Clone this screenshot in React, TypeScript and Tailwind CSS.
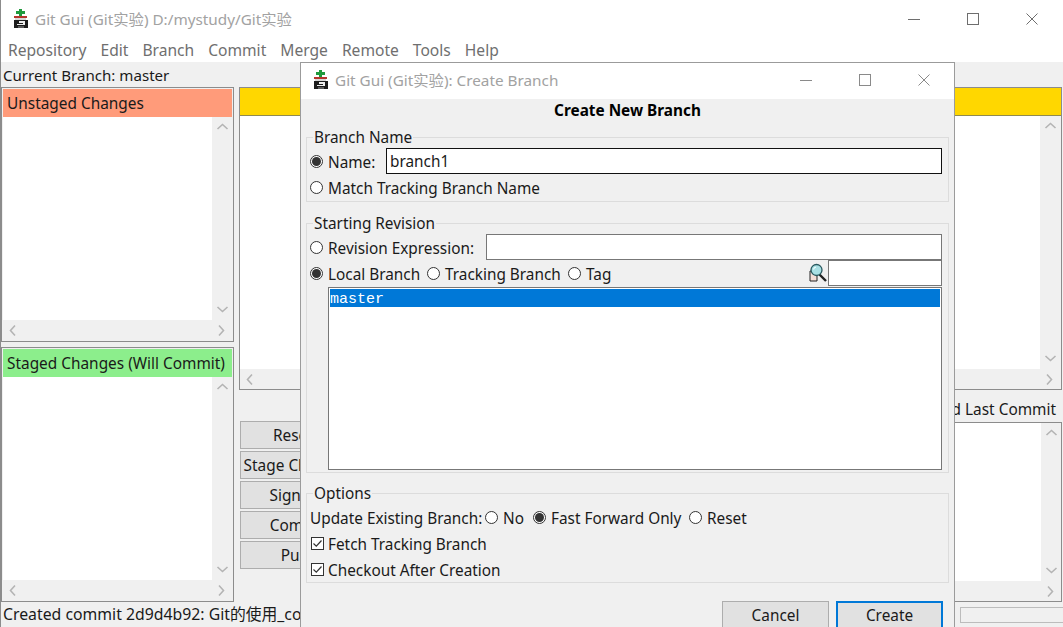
import type { ReactNode } from "react";

const uiFont = "font-['Noto_Sans','Noto_Sans_CJK_SC',sans-serif]";

function GitIcon() {
  return (
    <svg width="16" height="20" viewBox="0 0 16 20" shapeRendering="crispEdges" className="shrink-0">
      <rect x="6" y="0" width="3" height="7" fill="#1f9a3c" />
      <rect x="3" y="2" width="9" height="3" fill="#1f9a3c" />
      <rect x="1" y="7" width="13" height="2" fill="#b5352c" />
      <rect x="2" y="9" width="11" height="2" fill="#d9d9d9" />
      <rect x="1" y="11" width="14" height="8" fill="#1c1c1c" />
      <rect x="6" y="12" width="6" height="2" fill="#eeeeee" />
      <rect x="10" y="12" width="2" height="4" fill="#eeeeee" />
      <rect x="4" y="15" width="7" height="1" fill="#eeeeee" />
      <rect x="5" y="17" width="6" height="2" fill="#5a5a5a" />
    </svg>
  );
}

function SearchIcon() {
  return (
    <svg width="19" height="20" viewBox="0 0 19 20" className="shrink-0">
      <path d="M1 8H8V18H1Z" fill="#f5dfd8" stroke="#222" strokeWidth="1" />
      <path d="M10 11L17 18" stroke="#222" strokeWidth="2.4" />
      <circle cx="7.5" cy="7" r="5.5" fill="#a9e0e4" stroke="#2b5a60" strokeWidth="1.3" />
      <path d="M4.5 6.5A3 3 0 0 1 7 4" stroke="#f2ffff" strokeWidth="1.2" fill="none" />
    </svg>
  );
}

function WindowButtons({ color }: { color: string }) {
  return (
    <div className="flex items-center">
      <svg width="59" height="14" viewBox="0 0 59 14">
        <path d="M23 7.5H35" stroke={color} />
      </svg>
      <svg width="59" height="14" viewBox="0 0 59 14">
        <rect x="23.5" y="1.5" width="11" height="11" fill="none" stroke={color} />
      </svg>
      <svg width="59" height="14" viewBox="0 0 59 14">
        <path d="M23.5 1.5L34.5 12.5M34.5 1.5L23.5 12.5" stroke={color} />
      </svg>
    </div>
  );
}

const chevrons = {
  up: "M1.5 8L6.5 3.5L11.5 8",
  down: "M1.5 4L6.5 8.5L11.5 4",
  left: "M8 1.5L3.5 6.5L8 11.5",
  right: "M4 1.5L8.5 6.5L4 11.5",
};

function Chevron({ dir }: { dir: keyof typeof chevrons }) {
  return (
    <svg width="13" height="13" viewBox="0 0 13 13">
      <path d={chevrons[dir]} fill="none" stroke="#b4b4b4" strokeWidth="1.6" />
    </svg>
  );
}

function VScroll() {
  return (
    <div className="w-5 shrink-0 bg-[#f0f0f0] flex flex-col items-center justify-between py-1">
      <Chevron dir="up" />
      <Chevron dir="down" />
    </div>
  );
}

function HScroll() {
  return (
    <div className="h-5 shrink-0 bg-[#f0f0f0] flex items-center justify-between px-1">
      <Chevron dir="left" />
      <Chevron dir="right" />
    </div>
  );
}

function FileList({ title, color }: { title: string; color: string }) {
  return (
    <div className="h-[255px] border border-[#8c8c8c] p-px flex flex-col">
      <div className={`h-7 shrink-0 px-1 text-[15.4px] leading-[30px] text-[#1a1a1a] whitespace-nowrap ${color}`}>{title}</div>
      <div className="flex-1 flex min-h-0">
        <div className="flex-1 bg-white" />
        <VScroll />
      </div>
      <HScroll />
    </div>
  );
}

function SideButton({ children }: { children: ReactNode }) {
  return (
    <div className="h-7 border border-[#adadad] bg-[#e1e1e1] text-[15.4px] leading-7 text-center text-[#1a1a1a] whitespace-nowrap">
      {children}
    </div>
  );
}

function Radio({ checked }: { checked?: boolean }) {
  return (
    <span className="w-[13px] h-[13px] shrink-0 rounded-full border border-[#333] bg-white flex items-center justify-center">
      {checked && <span className="w-[9px] h-[9px] rounded-full bg-[#333]" />}
    </span>
  );
}

function Check() {
  return (
    <span className="w-[13px] h-[13px] shrink-0 border border-[#333] bg-white flex items-center justify-center">
      <svg width="11" height="11" viewBox="0 0 11 11">
        <path d="M1.5 5.5L4.3 8.2L9.5 2.5" fill="none" stroke="#333" strokeWidth="1.2" />
      </svg>
    </span>
  );
}

function Group({ title, className, children }: { title: string; className: string; children: ReactNode }) {
  return (
    <fieldset className={`border border-[#dcdcdc] pl-[3px] ${className}`}>
      <legend className="ml-[3px] px-px leading-5 text-[#1a1a1a]">{title}</legend>
      {children}
    </fieldset>
  );
}

function CreateBranchDialog() {
  return (
    <div className="absolute left-[299px] top-[62px] w-[655px] h-[580px] border border-[#9b9b9b] bg-[#f0f0f0] text-[15.35px] text-[#1a1a1a]">
      <div className="h-9 bg-white flex items-center justify-between pb-[2px]">
        <div className="flex items-center gap-[6px] pl-3">
          <GitIcon />
          <span className="text-[15.3px] text-[#a2a2a2] whitespace-nowrap">Git Gui (Git实验): Create Branch</span>
        </div>
        <WindowButtons color="#8a8a8a" />
      </div>

      <div className="h-6 text-center font-bold leading-[22px] text-black">Create New Branch</div>

      <div className="px-[5px]">
        <Group title="Branch Name" className="h-[75px] mt-[4px]">
          <div className="flex items-center h-[26px] mt-px">
            <Radio checked />
            <span className="ml-[5px] w-[58px] pt-[3px]">Name:</span>
            <div className="w-[556px] h-[26px] border border-[#111] bg-white pl-[3px] leading-[25px]">branch1</div>
          </div>
          <div className="flex items-center h-[26px]">
            <Radio />
            <span className="ml-[5px] pt-[3px]">Match Tracking Branch Name</span>
          </div>
        </Group>

        <Group title="Starting Revision" className="h-[260px] mt-[11px]">
          <div className="flex items-center h-[26px] mt-px">
            <Radio />
            <span className="ml-[5px] w-[158px] pt-[3px] whitespace-nowrap">Revision Expression:</span>
            <div className="w-[456px] h-[26px] border border-[#777] bg-white" />
          </div>
          <div className="flex items-center h-[26px]">
            <Radio checked />
            <span className="ml-[5px] w-[99px] pt-[3px] whitespace-nowrap">Local Branch</span>
            <Radio />
            <span className="ml-[5px] w-[123px] pt-[3px] whitespace-nowrap">Tracking Branch</span>
            <Radio />
            <span className="ml-[5px] w-[223px] pt-[3px]">Tag</span>
            <SearchIcon />
            <div className="w-[114px] h-[26px] border border-[#777] bg-white" />
          </div>
          <div className="mt-px ml-[18px] w-[614px] h-[183px] border border-[#777] bg-white p-px">
            <div className="h-[18px] overflow-hidden bg-[#0078d7] text-white font-['Liberation_Mono',monospace] text-[15px] leading-[21px]">
              master
            </div>
          </div>
        </Group>

        <Group title="Options" className="h-[100px] mt-[10px]">
          <div className="flex items-center h-[26px] mt-px">
            <span className="w-[175px] pt-[3px] whitespace-nowrap">Update Existing Branch:</span>
            <Radio />
            <span className="ml-[5px] w-[30px] pt-[3px]">No</span>
            <Radio checked />
            <span className="ml-[5px] w-[138px] pt-[3px] whitespace-nowrap">Fast Forward Only</span>
            <Radio />
            <span className="ml-[5px] pt-[3px]">Reset</span>
          </div>
          <div className="flex items-center h-[26px] pl-px">
            <Check />
            <span className="ml-[4px] pt-[3px]">Fetch Tracking Branch</span>
          </div>
          <div className="flex items-center h-[26px] pl-px">
            <Check />
            <span className="ml-[4px] pt-[3px]">Checkout After Creation</span>
          </div>
        </Group>

        <div className="flex justify-end gap-[7px] mt-[18px] pr-[6px]">
          <div className="w-[107px] h-[32px] border border-[#adadad] bg-[#e1e1e1] text-center leading-[27px]">Cancel</div>
          <div className="w-[107px] h-[32px] border-2 border-[#0078d7] bg-[#e1e1e1] text-center leading-[25px]">Create</div>
        </div>
      </div>
    </div>
  );
}

export default function App() {
  return (
    <div className={`relative w-[1063px] h-[627px] overflow-hidden flex flex-col bg-[#f0f0f0] border-l border-[#8c8c8c] ${uiFont}`}>
      <div className="h-[38px] shrink-0 bg-white flex items-center justify-between pr-px">
        <div className="flex items-center gap-[6px] pl-3">
          <GitIcon />
          <span className="text-[15.3px] text-[#a2a2a2] whitespace-nowrap">Git Gui (Git实验) D:/mystudy/Git实验</span>
        </div>
        <WindowButtons color="#6e6e6e" />
      </div>

      <div className="h-6 shrink-0 bg-white flex items-center gap-[14px] pl-[7px] pt-[2px] text-[15.6px] text-[#6f6f6f]">
        {["Repository", "Edit", "Branch", "Commit", "Merge", "Remote", "Tools", "Help"].map((m) => (
          <span key={m}>{m}</span>
        ))}
      </div>

      <div className="h-[25px] shrink-0 pl-[2px] text-[15.1px] leading-[27px] text-[#1a1a1a]">Current Branch: master</div>

      <div className="flex-1 min-h-0 flex gap-[5px] pr-px">
        <div className="w-[233px] shrink-0 flex flex-col gap-[5px]">
          <FileList title="Unstaged Changes" color="bg-[#ff9b7a]" />
          <FileList title="Staged Changes (Will Commit)" color="bg-[#8cee8c]" />
        </div>

        <div className="flex-1 flex flex-col min-w-0">
          <div className="h-[303px] shrink-0 border border-[#8c8c8c] flex flex-col">
            <div className="h-7 shrink-0 bg-[#ffd700] border-b border-[#8f8a50]" />
            <div className="flex-1 flex min-h-0 pr-px">
              <div className="flex-1 bg-white" />
              <VScroll />
            </div>
            <div className="pr-px">
              <HScroll />
            </div>
          </div>

          <div className="flex-1 flex gap-1 min-h-0">
            <div className="w-[117px] shrink-0 ml-px pt-[31px] flex flex-col gap-[2px]">
              <SideButton>Rescan</SideButton>
              <SideButton>Stage Changed</SideButton>
              <SideButton>Sign Off</SideButton>
              <SideButton>Commit</SideButton>
              <SideButton>Push</SideButton>
            </div>
            <div className="flex-1 flex flex-col min-w-0">
              <div className="h-8 shrink-0 pr-[6px] text-right text-[15.4px] leading-10 text-[#1a1a1a]">Amend Last Commit</div>
              <div className="flex-1 border border-[#8c8c8c] flex flex-col min-h-0">
                <div className="flex-1 flex min-h-0">
                  <div className="flex-1 bg-white" />
                  <VScroll />
                </div>
                <HScroll />
              </div>
            </div>
          </div>
        </div>
      </div>

      <div className="h-[25px] shrink-0 flex items-center justify-between text-[15.8px] text-[#1a1a1a]">
        <span className="pl-[2px] whitespace-nowrap">Created commit 2d9d4b92: Git的使用_commit</span>
        <div className="w-[103px] h-4 border border-[#bcbcbc] border-r-0" />
      </div>

      <CreateBranchDialog />
    </div>
  );
}
